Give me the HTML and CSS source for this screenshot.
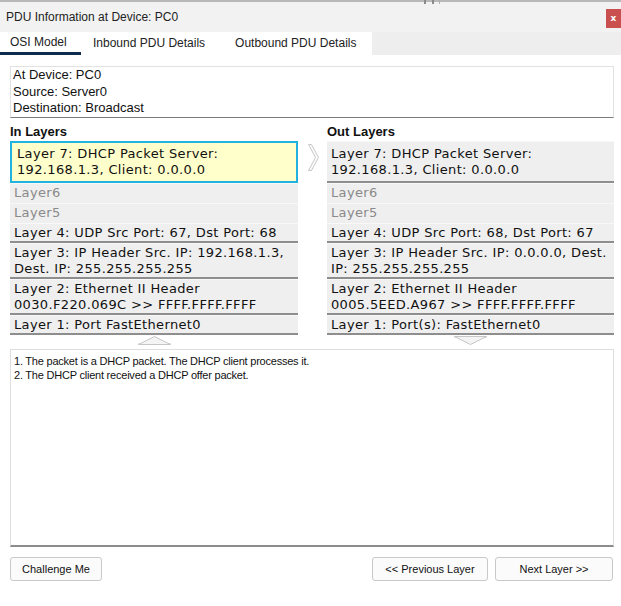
FILE: index.html
```html
<!DOCTYPE html>
<html>
<head>
<meta charset="utf-8">
<link rel="stylesheet" href="styles.css">
</head>
<body>
<div class="window">
  <div class="topline"><span class="tick tick-a"></span><span class="tick tick-b"></span><span class="tick tick-c"></span></div>
  <header class="titlebar">
    <span class="title">PDU Information at Device: PC0</span>
    <span class="close">x</span>
  </header>
  <nav class="tabbar">
    <div class="tabstrip">
      <span class="tab tab-first active">OSI Model</span>
      <span class="tab tab-mid">Inbound PDU Details</span>
      <span class="tab">Outbound PDU Details</span>
    </div>
  </nav>
  <main class="content">
    <div class="info">
      <div>At Device: PC0</div>
      <div>Source: Server0</div>
      <div>Destination: Broadcast</div>
    </div>
    <div class="layers">
      <section class="col">
        <div class="col-title">In Layers</div>
        <div class="layer-list">
          <div class="layer layer-selected">Layer 7: DHCP Packet Server:<br>192.168.1.3, Client: 0.0.0.0</div>
          <div class="layer layer-off">Layer6</div>
          <div class="layer layer-off">Layer5</div>
          <div class="layer">Layer 4: UDP Src Port: 67, Dst Port: 68</div>
          <div class="layer">Layer 3: IP Header Src. IP: 192.168.1.3,<br>Dest. IP: 255.255.255.255</div>
          <div class="layer">Layer 2: Ethernet II Header<br>0030.F220.069C &gt;&gt; FFFF.FFFF.FFFF</div>
          <div class="layer">Layer 1: Port FastEthernet0</div>
        </div>
        <div class="arrow-row">
          <svg width="33" height="9" viewBox="0 0 33 9"><rect x="0" y="7" width="33" height="2" fill="#e4e4e4"/><polygon points="0.5,8.5 16.5,0.5 32.5,8.5" fill="#f4f4f4" stroke="#c6c6c6" stroke-width="1"/></svg>
        </div>
      </section>
      <div class="mid">
        <svg width="11" height="27" viewBox="0 0 11 27"><polygon points="0.5,0.5 3.5,0.5 10.5,13.5 3.5,26.5 0.5,26.5 7.5,13.5" fill="#fafafa" stroke="#c8c8c8" stroke-width="1"/></svg>
      </div>
      <section class="col">
        <div class="col-title">Out Layers</div>
        <div class="layer-list">
          <div class="layer layer-top">Layer 7: DHCP Packet Server:<br>192.168.1.3, Client: 0.0.0.0</div>
          <div class="layer layer-off">Layer6</div>
          <div class="layer layer-off">Layer5</div>
          <div class="layer">Layer 4: UDP Src Port: 68, Dst Port: 67</div>
          <div class="layer">Layer 3: IP Header Src. IP: 0.0.0.0, Dest.<br>IP: 255.255.255.255</div>
          <div class="layer">Layer 2: Ethernet II Header<br>0005.5EED.A967 &gt;&gt; FFFF.FFFF.FFFF</div>
          <div class="layer">Layer 1: Port(s): FastEthernet0</div>
        </div>
        <div class="arrow-row">
          <svg width="33" height="9" viewBox="0 0 33 9"><rect x="0" y="0" width="33" height="2" fill="#e4e4e4"/><polygon points="0.5,0.5 16.5,8.5 32.5,0.5" fill="#f4f4f4" stroke="#c6c6c6" stroke-width="1"/></svg>
        </div>
      </section>
    </div>
    <div class="desc">
      <div>1. The packet is a DHCP packet. The DHCP client processes it.</div>
      <div>2. The DHCP client received a DHCP offer packet.</div>
    </div>
    <div class="buttons">
      <button class="btn btn-challenge">Challenge Me</button>
      <span class="spacer"></span>
      <button class="btn btn-prev">&lt;&lt; Previous Layer</button>
      <button class="btn btn-next">Next Layer &gt;&gt;</button>
    </div>
  </main>
</div>
</body>
</html>
```
FILE: styles.css
```css
html, body {
  margin: 0;
  padding: 0;
  background: #ffffff;
}
body {
  font-family: "Liberation Sans", Arial, sans-serif;
  color: #1a1a1a;
}
.window {
  width: 621px;
  height: 606px;
  position: relative;
  background: #ffffff;
}
.topline {
  height: 2px;
  background: #b8b8b8;
  position: relative;
}
.tick {
  position: absolute;
  top: 0;
  width: 2px;
  height: 4px;
  background: #8a8a8a;
}
.tick-a { left: 424px; }
.tick-b { left: 432px; }
.tick-c { left: 439px; width: 1px; background: #b0b0b0; }
.titlebar {
  height: 30px;
  background: #f2f2f2;
  display: flex;
  align-items: flex-start;
  justify-content: space-between;
}
.title {
  font-size: 12px;
  line-height: 30px;
  padding-left: 6px;
  color: #222;
}
.close {
  margin-top: 7px;
  width: 15px;
  height: 19px;
  background: #c9504f;
  color: #ffffff;
  font-family: "DejaVu Sans", sans-serif;
  font-weight: bold;
  font-size: 9px;
  line-height: 19px;
  text-align: center;
}
.tabbar {
  height: 23px;
  background: #eeeeee;
  display: flex;
}
.tabstrip {
  display: flex;
  background: #ffffff;
  width: 372px;
}
.tab {
  font-size: 12px;
  color: #222;
  line-height: 23px;
  padding: 0 12px 0 12px;
  box-sizing: border-box;
  height: 23px;
  white-space: nowrap;
}
.tab-first {
  padding: 0 14px 0 10px;
  width: 81px;
}
.tab-mid {
  padding: 0 18px 0 12px;
}
.tab.active {
  border-bottom: 3px solid #0e2a4c;
  line-height: 21px;
}
.content {
  padding: 11px 7px 0 10px;
}
.info {
  border: 1px solid #e2e2e2;
  border-bottom: 1px solid #7c7c7c;
  padding: 0 2px;
  font-size: 13px;
  line-height: 16.5px;
  color: #111;
}
.layers {
  display: grid;
  grid-template-columns: 288px 29px 287px;
  margin-top: 4px;
}
.col-title {
  font-weight: bold;
  font-size: 13px;
  line-height: 19px;
  color: #111;
}
.layer-list {
  display: flex;
  flex-direction: column;
}
.layer {
  font-family: "DejaVu Sans", Verdana, sans-serif;
  font-size: 13px;
  letter-spacing: 0.35px;
  line-height: 16px;
  white-space: nowrap;
  color: #111;
  background: #efefef;
  padding: 1px 4px 0 4px;
  border-top: 1px solid #f8f8f8;
  border-bottom: 2px solid #8e8e8e;
}
.layer-off {
  color: #8a8a8a;
  border-bottom-color: #efefef;
}
.layer-selected {
  background: #ffffcb;
  border: 2px solid #23b1e0;
  padding: 3px 5px 3px 5px;
}
.layer-top {
  padding: 4px 4px 3px 4px;
}
.arrow-row {
  display: flex;
  justify-content: center;
  padding-top: 1px;
  height: 9px;
}
.arrow-row svg {
  display: block;
}
.mid {
  padding-top: 22px;
  padding-left: 10px;
}
.mid svg {
  display: block;
}
.desc {
  margin-top: 4px;
  height: 198px;
  box-sizing: border-box;
  border: 1px solid #dedede;
  border-bottom: 2px solid #8c8c8c;
  padding: 4px 3px;
  font-size: 11px;
  letter-spacing: -0.22px;
  line-height: 14px;
  color: #111;
}
.buttons {
  display: flex;
  gap: 7px;
  margin-top: 10px;
  padding-right: 1px;
}
.spacer {
  flex: 1;
}
.btn {
  font-family: "Liberation Sans", Arial, sans-serif;
  font-size: 11px;
  color: #111;
  height: 24px;
  background: #fbfbfb;
  border: 1px solid #c9c9c9;
  border-radius: 3px;
  padding: 0;
}
.btn-challenge { width: 92px; }
.btn-prev { width: 116px; }
.btn-next { width: 118px; }
```
